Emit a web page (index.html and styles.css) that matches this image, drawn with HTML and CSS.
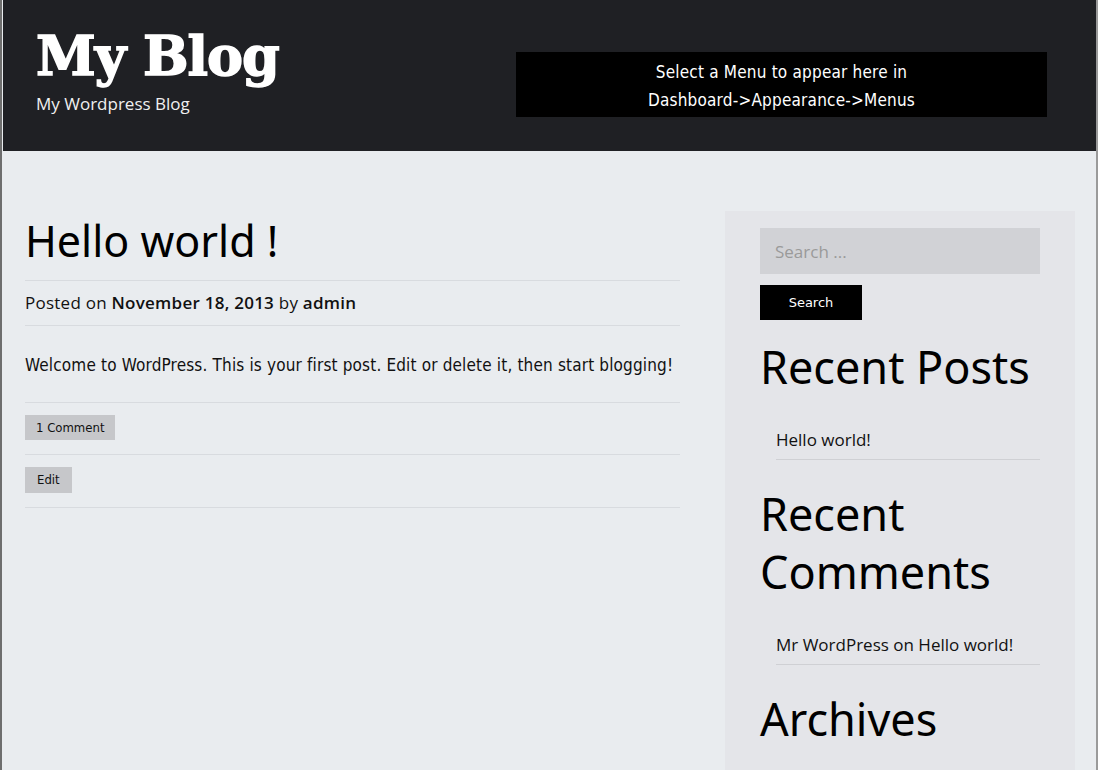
FILE: index.html
```html
<!DOCTYPE html>
<html lang="en">
<head>
  <meta charset="UTF-8" />
  <title>My Blog | My Wordpress Blog</title>
  <link rel="stylesheet" href="styles.css">
</head>
<body>
  <div class="page">
    <header class="site-header">
      <div class="branding">
        <a href="#" class="site-title">My Blog</a>
        <p class="site-description">My Wordpress Blog</p>
      </div>
      <nav class="main-nav">
        <p>Select a Menu to appear here in<br>Dashboard-&gt;Appearance-&gt;Menus</p>
      </nav>
    </header>

    <div class="site-content">
      <main class="content-area">
        <article class="post">
          <h1 class="entry-title">Hello world !</h1>
          <div class="entry-meta">
            Posted on <strong>November 18, 2013</strong> by <strong>admin</strong>
          </div>
          <div class="entry-content">
            <p>Welcome to WordPress. This is your first post. Edit or delete it, then start blogging!</p>
          </div>
          <div class="entry-footer">
            <a href="#" class="tag-btn">1 Comment</a>
          </div>
          <div class="entry-footer">
            <a href="#" class="tag-btn">Edit</a>
          </div>
        </article>
      </main>

      <aside class="sidebar">
        <form class="search-form">
          <input type="search" class="search-field" placeholder="Search ...">
          <button type="button" class="search-submit">Search</button>
        </form>

        <section class="widget">
          <h2 class="widget-title">Recent Posts</h2>
          <ul>
            <li><a href="#">Hello world!</a></li>
          </ul>
        </section>

        <section class="widget">
          <h2 class="widget-title">Recent Comments</h2>
          <ul>
            <li>Mr WordPress on <a href="#">Hello world!</a></li>
          </ul>
        </section>

        <section class="widget">
          <h2 class="widget-title">Archives</h2>
        </section>
      </aside>
    </div>
  </div>
</body>
</html>
```

FILE: styles.css
```css
* {
  box-sizing: border-box;
}
html, body {
  margin: 0;
  padding: 0;
  height: 100%;
  overflow: hidden;
}
body {
  background: #fff;
  font-family: 'Open Sans', sans-serif;
  color: #111;
}
.page {
  height: 100%;
  margin-right: 3px;
  border-left: 2px solid #6e6e6e;
  border-right: 2px solid #9a9a9a;
  padding-left: 1px;
  background: #e9ecef;
}
a {
  color: inherit;
  text-decoration: none;
}

/* header */
.site-header {
  display: flex;
  justify-content: space-between;
  align-items: flex-start;
  background: #1f2024;
  height: 151px;
  padding: 24px 49px 0 33px;
}
.site-title {
  display: block;
  font-family: 'DejaVu Serif', serif;
  font-weight: bold;
  font-size: 54px;
  line-height: 64px;
  color: #fff;
  letter-spacing: -1px;
  -webkit-text-stroke: 1.5px #fff;
}
.site-description {
  margin: 4px 0 0;
  color: #f0f0f0;
  font-size: 17px;
}
.main-nav {
  margin-top: 28px;
  width: 531px;
  height: 65px;
  background: #000;
  color: #fff;
  text-align: center;
}
.main-nav p {
  margin: 6px 0 0;
  font-family: 'DejaVu Sans Condensed', sans-serif;
  font-size: 17px;
  line-height: 28px;
  letter-spacing: 0.2px;
}

/* content */
.site-content {
  display: flex;
  align-items: flex-start;
  gap: 45px;
  padding: 60px 0 0 22px;
}
.content-area {
  width: 655px;
}
.entry-title {
  margin: 0;
  font-family: 'Noto Sans', sans-serif;
  font-weight: normal;
  font-size: 43px;
  line-height: 60px;
  padding-bottom: 9px;
  color: #000;
  border-bottom: 1px solid #d8dbdf;
}
.entry-meta {
  font-size: 17px;
  line-height: 44px;
  letter-spacing: 0.25px;
  border-bottom: 1px solid #d8dbdf;
}
.entry-meta strong {
  font-weight: 600;
}
.entry-content {
  font-family: 'DejaVu Sans Condensed', sans-serif;
  font-size: 17px;
  letter-spacing: 0.16px;
  border-bottom: 1px solid #d8dbdf;
}
.entry-content p {
  margin: 0;
  padding: 27px 0 25px;
  line-height: 24px;
}
.entry-footer {
  padding: 12px 0 14px;
  border-bottom: 1px solid #d8dbdf;
}
.tag-btn {
  display: inline-block;
  background: #c6c7ca;
  font-family: 'DejaVu Sans Condensed', sans-serif;
  font-size: 13px;
  line-height: 25px;
  padding: 0 11px;
  color: #111;
}
.entry-footer:last-child .tag-btn {
  padding: 0 12px;
  line-height: 26px;
}

/* sidebar */
.sidebar {
  width: 350px;
  min-height: 600px;
  background: #e4e5e9;
  padding: 17px 35px 0;
}
.search-form {
  margin-bottom: 18px;
}
.search-field {
  display: block;
  width: 100%;
  height: 46px;
  border: none;
  background: #d1d2d6;
  font-family: 'Open Sans', sans-serif;
  font-size: 17px;
  padding: 0 15px;
  outline: none;
}
.search-field::placeholder {
  color: #9a9a9a;
}
.search-submit {
  display: block;
  margin-top: 11px;
  width: 102px;
  height: 35px;
  border: none;
  background: #000;
  color: #fff;
  font-family: 'DejaVu Sans', sans-serif;
  font-size: 13px;
  cursor: pointer;
}
.widget-title {
  margin: 0;
  font-family: 'Noto Sans', sans-serif;
  font-weight: normal;
  font-size: 45px;
  line-height: 58px;
  color: #000;
}
.widget ul {
  list-style: none;
  margin: 25px 0 25px;
  padding: 0 0 0 16px;
}
.widget li {
  font-size: 17px;
  line-height: 38px;
  border-bottom: 1px solid #cfd0d4;
}
```
